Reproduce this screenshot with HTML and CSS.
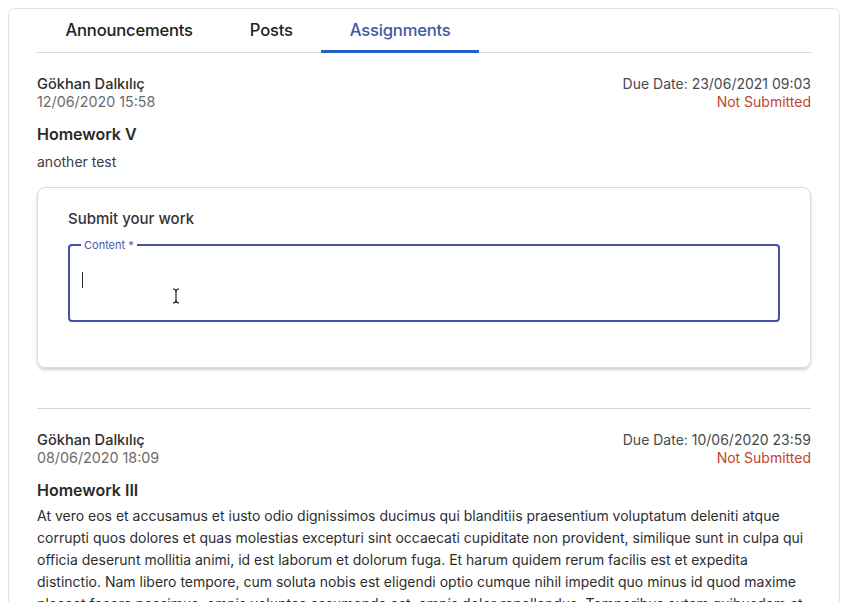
FILE: index.html
```html
<!DOCTYPE html>
<html lang="en">
<head>
  <meta charset="UTF-8">
  <title>Assignments</title>
  <link rel="stylesheet" href="styles.css">
</head>
<body>

  <div class="card">
    <!-- Tabs -->
    <div class="tabs">
      <div class="tab">Announcements</div>
      <div class="tab">Posts</div>
      <div class="tab active">Assignments</div>
    </div>

    <!-- Assignment 1 -->
    <div class="assignment">
      <div class="meta">
        <div>
          <div class="author">Gökhan Dalkılıç</div>
          <div class="date">12/06/2020 15:58</div>
        </div>
        <div class="due">
          <div class="due-date">Due Date: 23/06/2021 09:03</div>
          <div class="status">Not Submitted</div>
        </div>
      </div>
      <h3 class="title">Homework V</h3>
      <p class="desc">another test</p>

      <div class="submit-box">
        <div class="submit-title">Submit your work</div>
        <fieldset class="field">
          <legend>Content *</legend>
          <div class="caret"></div>
          <svg class="ibeam" width="8" height="16" viewBox="0 0 8 16">
            <path d="M1 1 Q4 1 4 4 L4 12 Q4 15 1 15 M7 1 Q4 1 4 4 M4 12 Q4 15 7 15" fill="none" stroke="#222" stroke-width="1.2"/>
          </svg>
        </fieldset>
      </div>
    </div>

    <div class="divider"></div>

    <!-- Assignment 2 -->
    <div class="assignment">
      <div class="meta">
        <div>
          <div class="author">Gökhan Dalkılıç</div>
          <div class="date">08/06/2020 18:09</div>
        </div>
        <div class="due">
          <div class="due-date">Due Date: 10/06/2020 23:59</div>
          <div class="status">Not Submitted</div>
        </div>
      </div>
      <h3 class="title">Homework III</h3>
      <p class="desc long">At vero eos et accusamus et iusto odio dignissimos ducimus qui blanditiis praesentium voluptatum deleniti atque corrupti quos dolores et quas molestias excepturi sint occaecati cupiditate non provident, similique sunt in culpa qui officia deserunt mollitia animi, id est laborum et dolorum fuga. Et harum quidem rerum facilis est et expedita distinctio. Nam libero tempore, cum soluta nobis est eligendi optio cumque nihil impedit quo minus id quod maxime placeat facere possimus, omnis voluptas assumenda est, omnis dolor repellendus. Temporibus autem quibusdam et aut officiis debitis aut rerum necessitatibus saepe eveniet ut et voluptates repudiandae sint et molestiae non recusandae.</p>
    </div>
  </div>

</body>
</html>
```

FILE: styles.css
```css
body {
  margin: 0;
  padding: 8px 7px 0 8px;
  font-family: Inter, "Noto Sans", sans-serif;
  background: #ffffff;
  color: #2b2b2b;
  overflow: hidden;
}
.card {
  border: 1px solid #e2e2e2;
  border-bottom: none;
  border-radius: 7px 7px 0 0;
  padding: 0 28px;
  height: 700px;
}
.tabs {
  display: flex;
  border-bottom: 1px solid #dcdcdc;
  height: 43px;
}
.tab {
  padding: 11px 28.5px 0;
  font-size: 16.6px;
  font-weight: 500;
  color: #222;
  letter-spacing: -0.2px;
}
.tab.active {
  color: #3a5aa8;
  border-bottom: 3px solid #2561c4;
  margin-bottom: -1px;
  height: 30px;
}
.assignment {
  padding-top: 22px;
}
.meta {
  display: flex;
  justify-content: space-between;
  font-size: 14px;
  line-height: 18px;
}
.author {
  color: #2e2e2e;
  font-weight: 500;
  font-size: 14.6px;
}
.date {
  color: #6b6b6b;
  font-size: 14.3px;
}
.due {
  text-align: right;
}
.due-date {
  color: #4a4a4a;
}
.status {
  color: #c0442a;
}
.title {
  font-size: 16px;
  font-weight: 600;
  margin: 13px 0 0;
  line-height: 20px;
  color: #2a2a2a;
}
.desc {
  font-size: 14px;
  margin: 9px 0 0;
  line-height: 18px;
  color: #3d3d3d;
}
.desc.long {
  line-height: 22px;
  color: #2e2e2e;
  margin-top: 5px;
}
.submit-box {
  margin-top: 16px;
  border: 1px solid #dcdcdc;
  border-radius: 8px;
  box-shadow: 0 2px 3px rgba(0, 0, 0, 0.18);
  padding: 21px 30px 45px;
}
.submit-title {
  font-size: 15px;
  font-weight: 500;
  color: #333;
}
.field {
  position: relative;
  margin: 10px 0 0;
  border: 2px solid #4450a0;
  border-radius: 4px;
  height: 80px;
  padding: 0 12px;
}
.field legend {
  font-size: 11px;
  color: #4a57a6;
  padding: 0 3px;
  margin-left: -1px;
}
.caret {
  width: 1px;
  height: 16px;
  background: #222;
  margin-top: 20px;
}
.ibeam {
  position: absolute;
  left: 102px;
  top: 36px;
}
.divider {
  height: 1px;
  background: #d6d6d6;
  margin-top: 40px;
}
```
